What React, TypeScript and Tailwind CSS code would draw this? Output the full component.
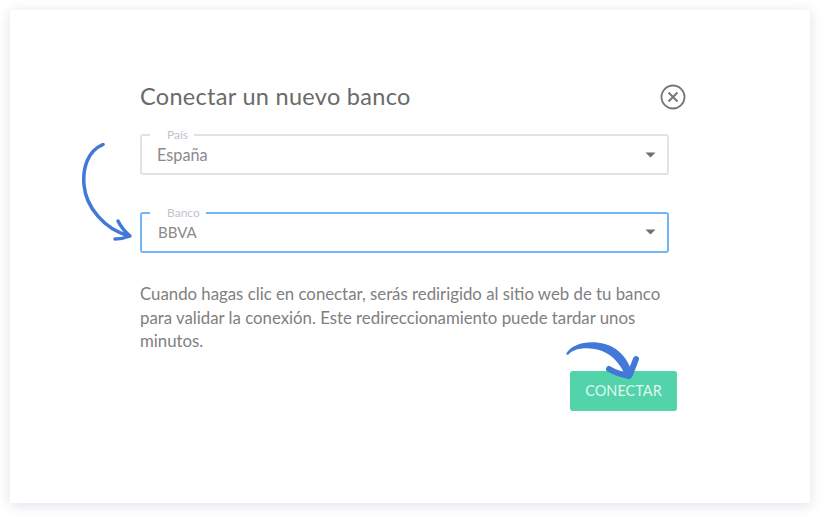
import React from "react";

const Caret = () => (
  <svg width="11" height="6" viewBox="0 0 11 6" className="shrink-0">
    <path d="M0.5 0.5h10L5.5 5.5z" fill="#6f6f6f" />
  </svg>
);

interface SelectFieldProps {
  label: string;
  value: string;
  active?: boolean;
}

const SelectField: React.FC<SelectFieldProps> = ({ label, value, active }) => {
  return (
    <fieldset
      className={
        active
          ? "h-[46px] rounded-[3px] border-2 border-[#72b6f5] pl-[15px] pr-[11px] flex items-center"
          : "h-[46px] rounded-[3px] border-2 border-[#e3e3e3] pl-[15px] pr-[11px] flex items-center"
      }
    >
      <legend className="-ml-[7px] pl-[17px] pr-[6px] text-[12px] leading-[11px] text-[#c2c2cc]">{label}</legend>
      <div className="flex flex-1 items-center justify-between mt-[3px]">
        <span className={active ? "ml-[1px] text-[15px] text-[#8a8a8a]" : "text-[16.3px] text-[#8a8a8a]"}>{value}</span>
        <Caret />
      </div>
    </fieldset>
  );
};

export default function App() {
  return (
    <div className="w-[824px] h-[517px] bg-white p-[10px] pb-[14px] font-['Lato','Noto_Sans',sans-serif]">
      <div className="relative h-full w-[800px] bg-white shadow-[0_2px_12px_rgba(90,100,140,0.2)] pl-[130px] pr-[141px] pt-[73px]">
        <div className="flex items-center justify-between h-[28px] -mr-[17px]">
          <h2 className="text-[23.5px] tracking-[0.3px] text-[#6a6a6a] font-normal">Conectar un nuevo banco</h2>
          <svg width="26" height="26" viewBox="0 0 26 26" fill="none" stroke="#777777" strokeWidth="1.8">
            <circle cx="13" cy="13" r="11.500" />
            <path d="M8.500 8.500l9 9M17.500 8.500l-9 9" strokeWidth="2" />
          </svg>
        </div>

        <div className="mt-[18px] flex flex-col gap-[32px]">
          <SelectField label="País" value="España" />
          <SelectField label="Banco" value="BBVA" active />
        </div>

        <p className="mt-[29px] text-[16.8px] leading-[23.5px] text-[#808080]">
          Cuando hagas clic en conectar, serás redirigido al sitio web de tu banco para validar la conexión. Este
          redireccionamiento puede tardar unos minutos.
        </p>

        <div className="mt-[18px] -mr-[8px] flex justify-end">
          <button className="h-[40px] w-[107px] rounded-[3px] bg-[#52d3aa] text-[14.5px] text-[#dff7ef]">CONECTAR</button>
        </div>

        {/* arrows drawn over the form */}
        <svg className="absolute left-[70px] top-[133px]" width="56" height="100" viewBox="0 0 56 100" fill="none">
          <path
            d="M23 1.500C8 8 2.500 24 4 42c2 22 20 44 45 51"
            stroke="#4279d9"
            strokeWidth="3.500"
            strokeLinecap="round"
          />
          <path
            d="M38 78c3 6 6 10 12 15c-5 2-10 3-15 3"
            stroke="#4279d9"
            strokeWidth="3.500"
            strokeLinecap="round"
            strokeLinejoin="round"
          />
        </svg>
        <svg className="absolute left-[554px] top-[331px]" width="76" height="44" viewBox="0 0 76 44" fill="none">
          <path d="M2 13C8 2 26 -1 41 3C55 7 65 18 69 35L62 36C56 22 48 14 38 10C26 6 11 6 4 14Z" fill="#4279d9" />
          <path
            d="M45 28c7 4 13 6 20 7 3-6 5-12 7-17"
            stroke="#4279d9"
            strokeWidth="6"
            strokeLinecap="round"
            strokeLinejoin="round"
          />
        </svg>
      </div>
    </div>
  );
}
